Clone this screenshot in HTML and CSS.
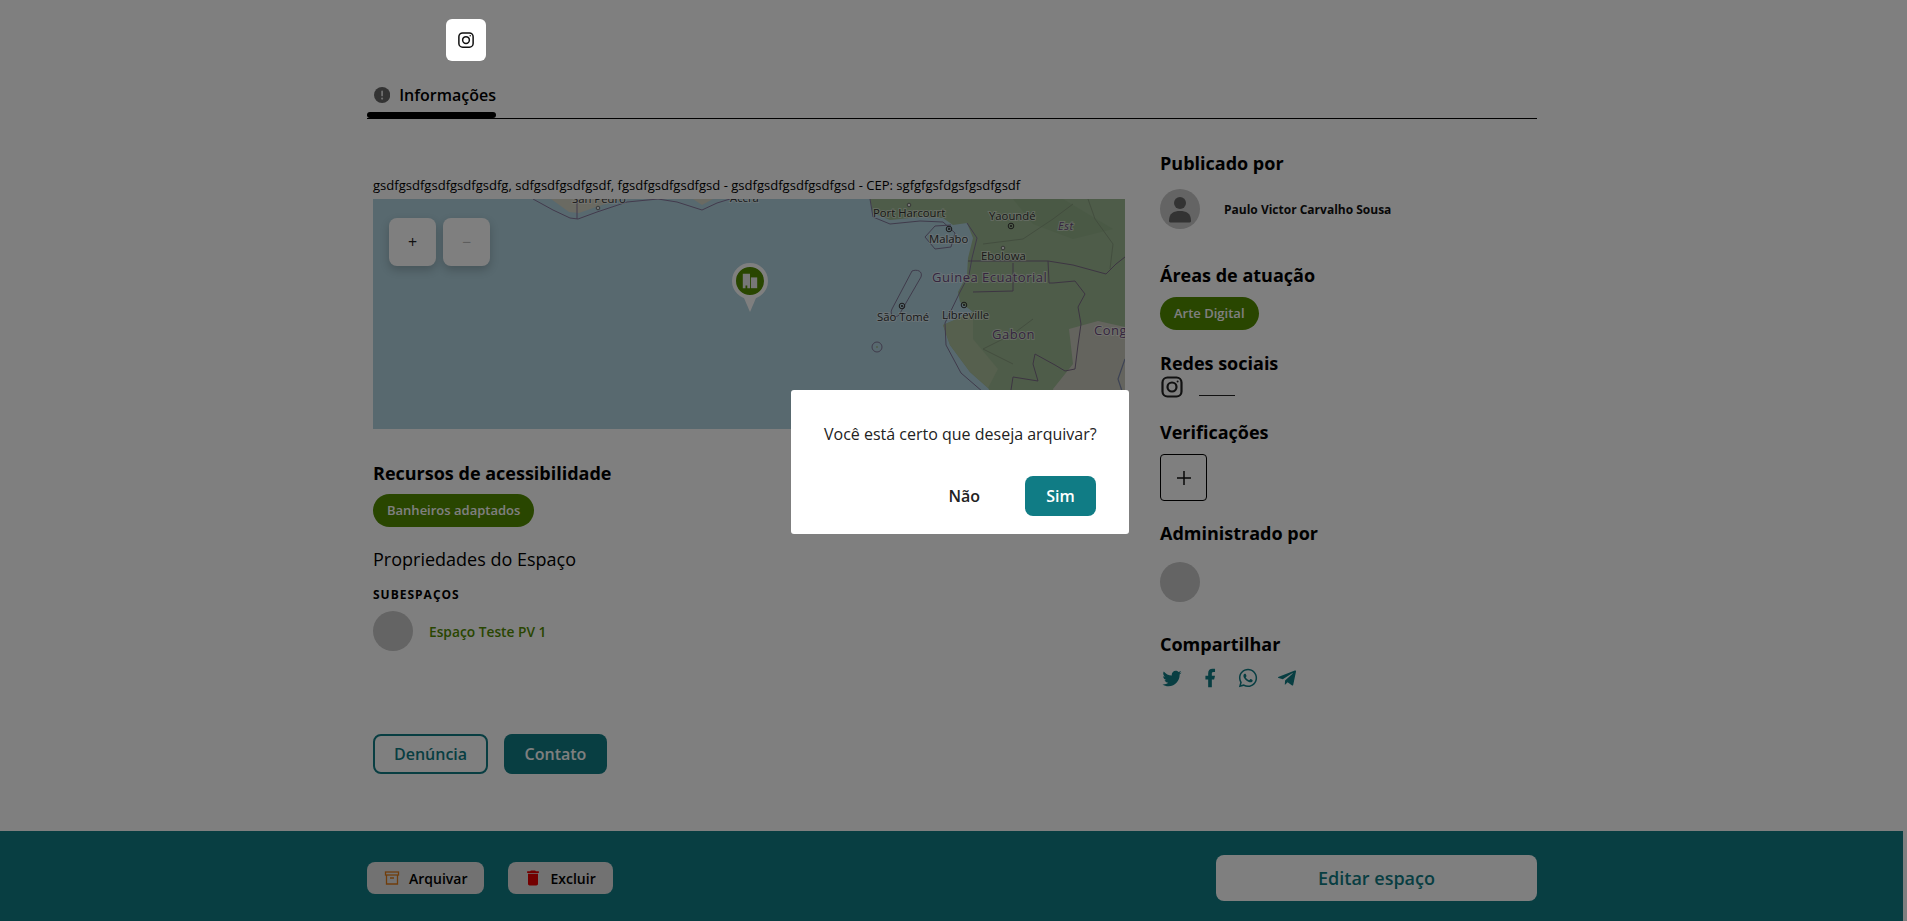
FILE: index.html
```html
<!DOCTYPE html>
<html lang="pt-BR">

<head>
  <meta charset="UTF-8">
  <meta name="viewport" content="width=device-width, initial-scale=1.0">
  <title>Espaço</title>
  <link rel="stylesheet" href="styles.css">
</head>

<body>
  <main class="container">
    <a class="social-top">
      <svg viewBox="0 0 24 24" width="18" height="18" fill="none" stroke="#111" stroke-width="2">
        <rect x="2.5" y="2.5" width="19" height="19" rx="5"/>
        <circle cx="12" cy="12" r="4.5"/>
        <circle cx="17.6" cy="6.4" r="1" fill="#111" stroke="none"/>
      </svg>
    </a>

    <div class="tabs">
      <div class="tab">
        <div class="tab-label">
          <svg viewBox="0 0 18 18" width="18" height="18">
            <circle cx="9" cy="9" r="9" fill="#666"/>
            <rect x="8" y="4" width="2" height="6.5" rx="1" fill="#ddd"/>
            <circle cx="9" cy="13" r="1.2" fill="#ddd"/>
          </svg>
          <span>Informações</span>
        </div>
        <div class="tab-bar"></div>
      </div>
    </div>

    <div class="content">
      <section class="left">
        <p class="address">gsdfgsdfgsdfgsdfgsdfg, sdfgsdfgsdfgsdf, fgsdfgsdfgsdfgsd - gsdfgsdfgsdfgsdfgsd - CEP: sgfgfgsfdgsfgsdfgsdf</p>

        <div class="map">
          <svg class="map-tiles" viewBox="0 0 752 230" width="752" height="230">
            <rect width="752" height="230" fill="#b0d2de"/>
            <!-- costa de cima -->
            <path d="M178 0L196 13L206 14L226 7L250 0Z" fill="#d4d4c4"/>
            <path d="M320 0L329 6L340 0Z" fill="#d4d4c4"/>
            <path d="M160 0L180 11L197 19L205 20L224 13L254 3L285 0L304 3L329 11L344 4L357 0" fill="none" stroke="#85759a" stroke-width="1"/>
            <path d="M204 0V20" stroke="#85759a" stroke-width="1"/>
            <!-- continente -->
            <path d="M497 0L500 14L517 21L547 18L570 19L580 26L594 24L600 39L595 59L594 76L585 93L587 103L600 113L570 126L577 146L597 173L615 189L640 230H752V0Z" fill="#9cb892"/>
            <path d="M600 113L570 126L577 146L597 173L615 189L625 170L600 140Z" fill="#acc09c"/>
            <path d="M640 0L690 0L740 30L700 40L660 25Z" fill="#94b28a"/>
            <path d="M696 130L725 122L752 128V230H690L680 190L700 165Z" fill="#c8c8bc"/>
            <path d="M497 0L500 18L517 25L547 22L570 23M570 23L582 34L578 48L562 50L552 38L562 27L578 26M594 24L604 39L599 59L596 76L587 93L572 124L573 146L588 174L610 193" fill="none" stroke="#7f7596" stroke-width="1"/>
            <!-- fronteiras -->
            <path d="M595 62H640L675 62L700 66L733 75L743 65L752 58M675 62L676 84L680 84L702 82L712 95L705 108L708 125L705 146L702 170L692 172L682 166L662 155L660 165L665 182L640 178L638 191" fill="none" stroke="#7a6a85" stroke-width="1"/>
            <path d="M600 93L640 92V64" fill="none" stroke="#7a6a85" stroke-width="1"/>
            <path d="M715 0L722 20L740 45L737 70M610 45L650 40L680 20L700 5M660 120L640 135L610 150L640 165" fill="none" stroke="#829478" stroke-width=".8"/>
            <path d="M752 160L745 180L750 195" fill="none" stroke="#7a86a8" stroke-width="1.2"/>
            <!-- ilhas -->
            <path d="M539 72C544 70 550 72 548 78L526 116C522 120 516 116 519 110Z" fill="none" stroke="#7f7596" stroke-width="1"/>
            <circle cx="504" cy="148" r="5" fill="none" stroke="#7f7596" stroke-width="1"/>
            <circle cx="504" cy="148" r="1" fill="#9cb892"/>
            <!-- cidades -->
            <g fill="none" stroke="#333" stroke-width="1">
              <circle cx="576" cy="30" r="2.8"/>
              <circle cx="638" cy="27" r="2.8"/>
              <circle cx="591" cy="106" r="2.8"/>
              <circle cx="529" cy="107" r="2.8"/>
            </g>
            <g fill="#333">
              <circle cx="576" cy="30" r="1.100"/>
              <circle cx="638" cy="27" r="1.100"/>
              <circle cx="591" cy="106" r="1.100"/>
              <circle cx="529" cy="107" r="1.100"/>
            </g>
            <g fill="#eee" stroke="#555" stroke-width=".8">
              <circle cx="630" cy="49" r="1.800"/>
              <circle cx="536" cy="6" r="1.800"/>
              <circle cx="225" cy="9" r="1.800"/>
            </g>
            <g class="map-label">
              <text x="199" y="4">San Pedro</text>
              <text x="357" y="3">Accra</text>
              <text x="500" y="18">Port Harcourt</text>
              <text x="616" y="21">Yaoundé</text>
              <text x="556" y="44">Malabo</text>
              <text x="608" y="61">Ebolowa</text>
              <text x="504" y="122">São Tomé</text>
              <text x="569" y="120">Libreville</text>
            </g>
            <g class="map-label map-country">
              <text x="559" y="83">Guinea Ecuatorial</text>
              <text x="619" y="140">Gabon</text>
              <text x="721" y="136">Congo</text>
              <text class="map-region" x="685" y="31">Est</text>
            </g>
          </svg>

          <div class="zoom-controls">
            <button class="zoom-btn">+</button>
            <button class="zoom-btn zoom-off">−</button>
          </div>

          <div class="pin">
            <div class="pin-head">
              <svg viewBox="0 0 20 20" width="18" height="18" fill="#eee">
                <path d="M2 2h8v16H7v-3H5v3H2z"/>
                <path d="M11 6h7v12h-7z"/>
              </svg>
            </div>
            <div class="pin-tip"></div>
          </div>
        </div>

        <h3 class="title title-access">Recursos de acessibilidade</h3>
        <span class="tag">Banheiros adaptados</span>

        <h4 class="props-title">Propriedades do Espaço</h4>
        <h5 class="sub-title">SUBESPAÇOS</h5>
        <div class="sub-row">
          <div class="avatar"></div>
          <a class="sub-link">Espaço Teste PV 1</a>
        </div>

        <div class="actions">
          <button class="btn btn-outline">Denúncia</button>
          <button class="btn btn-solid">Contato</button>
        </div>
      </section>

      <aside class="right">
        <h3 class="title">Publicado por</h3>
        <div class="owner">
          <div class="avatar avatar-user">
            <svg viewBox="0 0 40 40" width="40" height="40" fill="#666">
              <circle cx="20" cy="14" r="6"/>
              <path d="M9 32c0-8 5-10 11-10s11 2 11 10c0 1-1 1.500-2 1.500H11c-1 0-2-.5-2-1.500z"/>
            </svg>
          </div>
          <span class="owner-name">Paulo Victor Carvalho Sousa</span>
        </div>

        <h3 class="title title-areas">Áreas de atuação</h3>
        <span class="tag tag-area">Arte Digital</span>

        <h3 class="title title-social">Redes sociais</h3>
        <div class="social-row">
          <svg viewBox="0 0 24 24" width="24" height="24" fill="none" stroke="#222" stroke-width="2.200">
            <rect x="2.500" y="2.500" width="19" height="19" rx="5"/>
            <circle cx="12" cy="12" r="4.500"/>
            <circle cx="17.600" cy="6.400" r="1" fill="#222" stroke="none"/>
          </svg>
          <span class="social-line"></span>
        </div>

        <h3 class="title title-verif">Verificações</h3>
        <button class="verif-add">
          <svg viewBox="0 0 14 14" width="14" height="14" stroke="#111" stroke-width="1.500">
            <path d="M7 0V14M0 7H14"/>
          </svg>
        </button>

        <h3 class="title title-admin">Administrado por</h3>
        <div class="avatar avatar-admin"></div>

        <h3 class="title title-share">Compartilhar</h3>
        <div class="share">
          <svg viewBox="0 0 24 24" width="22" height="22"><path d="M22.46,6C21.69,6.35 20.86,6.58 20,6.69C20.88,6.16 21.56,5.32 21.88,4.31C21.05,4.81 20.13,5.16 19.16,5.36C18.37,4.5 17.26,4 16,4C13.65,4 11.73,5.92 11.73,8.29C11.73,8.63 11.77,8.96 11.84,9.27C8.28,9.09 5.11,7.38 3,4.79C2.63,5.42 2.42,6.16 2.42,6.94C2.42,8.43 3.17,9.75 4.33,10.5C3.62,10.5 2.96,10.3 2.38,10C2.38,10 2.38,10 2.38,10.03C2.38,12.11 3.86,13.85 5.82,14.24C5.46,14.34 5.08,14.39 4.69,14.39C4.42,14.39 4.15,14.36 3.89,14.31C4.43,16 6,17.26 7.89,17.29C6.43,18.45 4.58,19.13 2.56,19.13C2.22,19.13 1.88,19.11 1.54,19.07C3.44,20.29 5.7,21 8.12,21C16,21 20.33,14.46 20.33,8.79C20.33,8.6 20.33,8.42 20.32,8.23C21.16,7.63 21.88,6.87 22.46,6Z"/></svg>
          <svg viewBox="0 0 24 24" width="22" height="22"><path d="M14 13.5h2.5l1-4H14v-2c0-1.03 0-2 2-2h1.5V2.14c-.326-.043-1.557-.14-2.857-.14C11.928 2 10 3.657 10 6.7v2.8H7v4h3V22h4v-8.5z"/></svg>
          <svg viewBox="0 0 24 24" width="22" height="22"><path d="M12.04 2C6.58 2 2.13 6.45 2.13 11.91C2.13 13.66 2.59 15.36 3.45 16.86L2.05 22L7.3 20.62C8.75 21.41 10.38 21.83 12.04 21.83C17.5 21.83 21.95 17.38 21.95 11.92C21.95 9.27 20.92 6.78 19.05 4.91C17.18 3.03 14.69 2 12.04 2M12.05 3.67C14.25 3.67 16.31 4.53 17.87 6.09C19.42 7.65 20.28 9.72 20.28 11.92C20.28 16.46 16.58 20.15 12.04 20.15C10.56 20.15 9.11 19.76 7.85 19L7.55 18.83L4.43 19.65L5.26 16.61L5.06 16.29C4.24 15 3.8 13.47 3.8 11.91C3.81 7.37 7.5 3.67 12.05 3.67M8.53 7.33C8.37 7.33 8.1 7.39 7.87 7.64C7.65 7.89 7 8.5 7 9.71C7 10.93 7.89 12.1 8 12.27C8.14 12.44 9.76 14.94 12.25 16C12.84 16.27 13.3 16.42 13.66 16.53C14.25 16.72 14.79 16.69 15.22 16.63C15.7 16.56 16.68 16.03 16.89 15.45C17.1 14.87 17.1 14.38 17.04 14.27C16.97 14.17 16.81 14.11 16.56 14C16.31 13.86 15.09 13.26 14.87 13.18C14.64 13.1 14.5 13.06 14.31 13.3C14.15 13.55 13.67 14.11 13.53 14.27C13.38 14.44 13.24 14.46 13 14.34C12.74 14.21 11.94 13.95 11 13.11C10.26 12.45 9.77 11.64 9.62 11.39C9.5 11.15 9.61 11 9.73 10.89C9.84 10.78 10 10.6 10.1 10.45C10.23 10.31 10.27 10.2 10.35 10.04C10.43 9.87 10.39 9.73 10.33 9.61C10.27 9.5 9.77 8.26 9.56 7.77C9.36 7.29 9.16 7.35 9 7.34C8.86 7.34 8.7 7.33 8.53 7.33Z"/></svg>
          <svg viewBox="0 0 24 24" width="24" height="24"><path d="M9.78 18.65l.28-4.23 7.68-6.92c.34-.31-.07-.46-.52-.19L7.74 13.3 3.64 12c-.88-.25-.89-.86.2-1.3l15.97-6.16c.73-.33 1.43.18 1.15 1.3l-2.72 12.81c-.19.91-.74 1.13-1.5.71L12.6 16.3l-1.99 1.93c-.23.23-.42.42-.83.42z"/></svg>
        </div>
      </aside>
    </div>
  </main>

  <footer class="footer">
    <div class="footer-inner">
      <div class="footer-left">
        <button class="footer-btn">
          <svg class="icon-archive" viewBox="0 0 16 16" width="16" height="16" fill="none" stroke="#e07b17" stroke-width="1.300">
            <rect x="1.500" y="2" width="13" height="3"/>
            <path d="M2.500 5V14H13.500V5M6 8H10"/>
          </svg>
          Arquivar
        </button>
        <button class="footer-btn">
          <svg viewBox="0 0 24 24" width="20" height="20" fill="#e60000">
            <path d="M6 19c0 1.100.9 2 2 2h8c1.100 0 2-.9 2-2V7H6v12zM19 4h-3.500l-1-1h-5l-1 1H5v2h14V4z"/>
          </svg>
          Excluir
        </button>
      </div>
      <button class="edit-btn">Editar espaço</button>
    </div>
  </footer>

  <div class="overlay">
    <div class="modal">
      <p class="modal-text">Você está certo que deseja arquivar?</p>
      <div class="modal-actions">
        <button class="modal-no">Não</button>
        <button class="modal-yes">Sim</button>
      </div>
    </div>
  </div>
</body>

</html>
```

FILE: styles.css
```css
* {
  margin: 0;
  padding: 0;
  box-sizing: border-box;
}

html,
body {
  height: 100%;
}

body {
  display: flex;
  flex-direction: column;
  height: 100vh;
  overflow: hidden;
  background-color: #fff;
  color: #000;
  font-family: "Open Sans", "Noto Sans", sans-serif;
}

button {
  font-family: inherit;
  border: none;
  background: none;
}

.container {
  flex: 1;
  width: 1170px;
  margin-left: 367px;
}

.social-top {
  position: relative;
  z-index: 20;
  display: flex;
  justify-content: center;
  align-items: center;
  width: 40px;
  height: 42px;
  margin: 19px 0 0 79px;
  background-color: #fff;
  border-radius: 6px;
}

/* abas */
.tabs {
  border-bottom: 1px solid #000;
  height: 58px;
  padding-top: 25px;
}

.tab {
  width: 129px;
}

.tab-label {
  display: flex;
  align-items: center;
  gap: 9px;
  height: 18px;
  margin-bottom: 8px;
  padding-left: 7px;
  font-size: 16px;
  font-weight: 600;
  white-space: nowrap;
}

.tab-bar {
  height: 6px;
  background-color: #000;
  border-radius: 6px;
}

.content {
  display: flex;
  gap: 35px;
  padding-left: 6px;
}

.left {
  width: 752px;
  padding-top: 56px;
}

.right {
  width: 377px;
  padding-top: 32px;
}

.address {
  height: 24px;
  font-size: 13.05px;
  line-height: 20px;
  white-space: nowrap;
}

/* mapa */
.map {
  position: relative;
  width: 752px;
  height: 230px;
  overflow: hidden;
}

.map-tiles {
  display: block;
}

.map-label text {
  font-family: "Open Sans", sans-serif;
  font-size: 11.3px;
  fill: #333;
  stroke: rgba(255, 255, 255, .45);
  stroke-width: 2px;
  paint-order: stroke;
}

.map-country text {
  font-size: 13px;
  letter-spacing: .5px;
  fill: #6a4a7c;
}

.map-country .map-region {
  font-size: 11px;
  font-style: italic;
}

.zoom-controls {
  position: absolute;
  top: 19px;
  left: 16px;
  display: flex;
  gap: 7px;
}

.zoom-btn {
  width: 47px;
  height: 48px;
  background-color: #fff;
  border-radius: 8px;
  font-size: 16px;
  color: #222;
  box-shadow: 0 4px 10px rgba(0, 0, 0, .2);
}

.zoom-off {
  color: #bbb;
}

.pin {
  position: absolute;
  top: 64px;
  left: 359px;
  display: flex;
  flex-direction: column;
  align-items: center;
  width: 36px;
}

.pin-head {
  display: flex;
  justify-content: center;
  align-items: center;
  width: 36px;
  height: 36px;
  background-color: #528c00;
  border: 4px solid #fff;
  border-radius: 50%;
}

.pin-tip {
  width: 0;
  height: 0;
  margin-top: -1px;
  border-left: 6px solid transparent;
  border-right: 6px solid transparent;
  border-top: 14px solid #fff;
}

/* titulos */
.title {
  font-size: 18px;
  font-weight: 700;
  line-height: 24px;
}

.title-access {
  margin-top: 32px;
}

.title-areas {
  margin-top: 34px;
}

.title-social {
  margin-top: 21px;
}

.title-verif {
  margin-top: 21px;
}

.title-admin {
  margin-top: 20px;
}

.title-share {
  margin-top: 30px;
}

.tag {
  display: block;
  width: fit-content;
  height: 33px;
  margin-top: 9px;
  padding: 0 14px;
  background-color: #528c00;
  border-radius: 17px;
  color: #fff;
  font-size: 13px;
  font-weight: 600;
  line-height: 33px;
}

.tag-area {
  margin-top: 10px;
}

.props-title {
  margin-top: 20px;
  font-size: 18px;
  font-weight: 400;
  line-height: 24px;
}

.sub-title {
  margin-top: 15px;
  font-size: 12px;
  font-weight: 700;
  line-height: 18px;
  letter-spacing: 1px;
}

.sub-row {
  display: flex;
  align-items: center;
  gap: 16px;
  margin-top: 7px;
}

.avatar {
  width: 40px;
  height: 40px;
  background-color: #c8c8c8;
  border-radius: 50%;
  flex-shrink: 0;
}

.sub-link {
  font-size: 13.75px;
  font-weight: 600;
  color: #528c00;
}

.actions {
  display: flex;
  gap: 16px;
  margin-top: 83px;
}

.btn {
  height: 40px;
  border-radius: 8px;
  font-size: 16px;
  font-weight: 600;
}

.btn-outline {
  width: 115px;
  border: 2px solid #107c85;
  color: #107c85;
}

.btn-solid {
  width: 103px;
  background-color: #107c85;
  color: #fff;
}

/* coluna direita */
.owner {
  display: flex;
  align-items: center;
  gap: 24px;
  margin-top: 14px;
}

.owner-name {
  font-size: 12px;
  font-weight: 700;
  color: #111;
}

.avatar-user svg {
  display: block;
}

.social-row {
  display: flex;
  align-items: flex-end;
  gap: 15px;
  height: 24px;
}

.social-line {
  display: block;
  width: 36px;
  height: 1px;
  margin-bottom: 3px;
  background-color: #222;
}

.verif-add {
  display: flex;
  justify-content: center;
  align-items: center;
  width: 47px;
  height: 47px;
  margin-top: 10px;
  border: 1px solid #000;
  border-radius: 4px;
}

.avatar-admin {
  margin-top: 17px;
}

.share {
  display: flex;
  align-items: center;
  gap: 16px;
  margin: 10px 0 0 1px;
}

.share svg {
  fill: #107c85;
}

/* rodape */
.footer {
  height: 90px;
  margin-right: 4px;
  background-color: #107c85;
}

.footer-inner {
  display: flex;
  justify-content: space-between;
  align-items: center;
  width: 1170px;
  height: 100%;
  margin-left: 367px;
  padding-top: 4px;
}

.footer-left {
  display: flex;
  gap: 24px;
}

.footer-btn {
  display: flex;
  align-items: center;
  gap: 7px;
  height: 32px;
  padding: 0 17px 0 15px;
  background-color: #e4e4e4;
  border-radius: 8px;
  color: #000;
  font-size: 14px;
  font-weight: 600;
}

.icon-archive {
  margin: 0 2px;
}

.edit-btn {
  width: 321px;
  height: 46px;
  background-color: #fff;
  border-radius: 8px;
  color: #107c85;
  font-size: 18px;
  font-weight: 600;
}

/* modal */
.overlay {
  position: fixed;
  top: 0;
  left: 0;
  right: 0;
  bottom: 0;
  z-index: 10;
  display: flex;
  justify-content: center;
  align-items: center;
  padding: 3px 0 0 13px;
  background-color: rgba(0, 0, 0, .5);
}

.modal {
  width: 338px;
  height: 144px;
  padding: 33px 33px 0;
  background-color: #fff;
  border-radius: 3px;
}

.modal-text {
  font-size: 16px;
  line-height: 22px;
  white-space: nowrap;
  color: #222;
}

.modal-actions {
  display: flex;
  justify-content: flex-end;
  align-items: center;
  gap: 45px;
  margin-top: 31px;
}

.modal-no {
  font-size: 16px;
  font-weight: 600;
  color: #222;
}

.modal-yes {
  width: 71px;
  height: 40px;
  background-color: #107c85;
  border-radius: 8px;
  color: #fff;
  font-size: 16px;
  font-weight: 600;
}
```
